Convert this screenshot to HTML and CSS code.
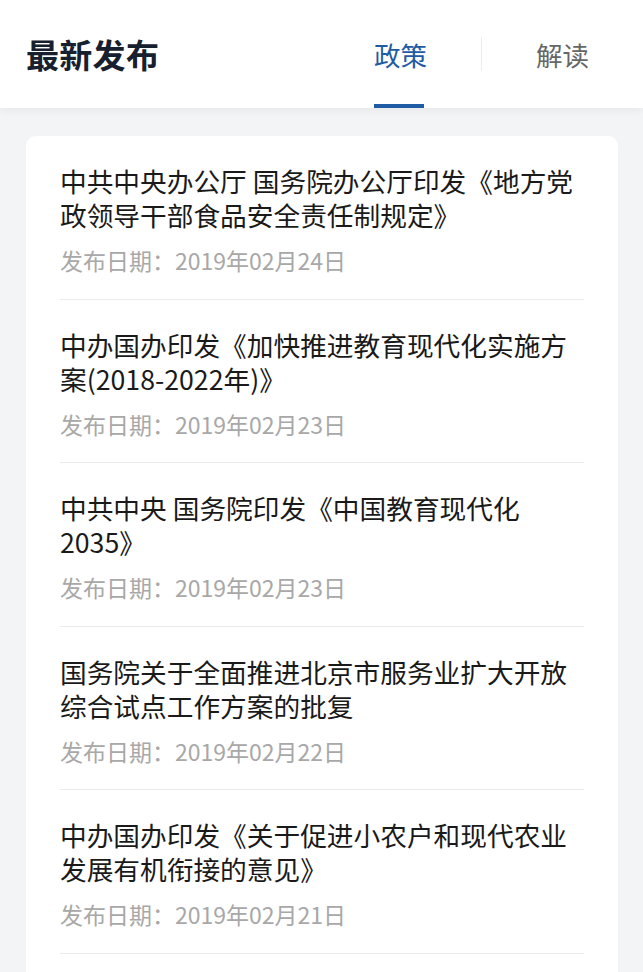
FILE: index.html
```html
<!DOCTYPE html>
<html lang="zh-CN">
<head>
  <meta charset="UTF-8">
  <title>最新发布</title>
  <link rel="stylesheet" href="styles.css">
</head>
<body>
  <div class="header">
    <h1>最新发布</h1>
    <div class="tabs">
      <div class="tab active">政策</div>
      <div class="tab-sep"></div>
      <div class="tab">解读</div>
    </div>
  </div>
  <div class="card">
    <ul class="list">
      <li>
        <div class="title">中共中央办公厅 国务院办公厅印发《地方党政领导干部食品安全责任制规定》</div>
        <div class="date">发布日期：2019年02月24日</div>
      </li>
      <li>
        <div class="title">中办国办印发《加快推进教育现代化实施方案(2018-2022年)》</div>
        <div class="date">发布日期：2019年02月23日</div>
      </li>
      <li>
        <div class="title">中共中央 国务院印发《中国教育现代化2035》</div>
        <div class="date">发布日期：2019年02月23日</div>
      </li>
      <li>
        <div class="title">国务院关于全面推进北京市服务业扩大开放综合试点工作方案的批复</div>
        <div class="date">发布日期：2019年02月22日</div>
      </li>
      <li>
        <div class="title">中办国办印发《关于促进小农户和现代农业发展有机衔接的意见》</div>
        <div class="date">发布日期：2019年02月21日</div>
      </li>
    </ul>
  </div>
</body>
</html>
```

FILE: styles.css
```css
html, body { margin: 0; padding: 0; }
body { font-family: "Noto Sans CJK SC", "Noto Sans", sans-serif; background: #f2f4f6; height: 972px; overflow: hidden; }
.header { display: flex; justify-content: space-between; align-items: stretch; height: 108px; background: #fff; box-shadow: 0 2px 8px rgba(0,0,0,0.06); padding-left: 26px; }
.header h1 { margin: 0; align-self: center; font-size: 33px; font-weight: 700; color: #17202e; letter-spacing: 0.3px; }
.tabs { display: flex; align-items: center; gap: 54px; padding-right: 54px; }
.tab { position: relative; height: 100%; display: flex; align-items: center; font-size: 26.5px; color: #666; }
.tab.active { color: #1d5ba4; }
.tab.active::after { content: ""; position: absolute; left: 0; bottom: 0; width: 50px; height: 4px; background: #1d5ba4; }
.tab-sep { width: 1px; height: 34px; background: #ececec; }
.card { margin: 28px 25px 0 26px; min-height: 900px; background: #fff; border-radius: 10px; padding: 0 34px; }
.list { list-style: none; margin: 0; padding: 0; }
.list li { padding: 28px 0 23.5px; border-bottom: 1px solid #ececec; }
.title { font-size: 26.7px; line-height: 34px; color: #1a1a1a; }
.date { margin-top: 13px; font-size: 23px; line-height: 30px; color: #a8a8a8; }
```
